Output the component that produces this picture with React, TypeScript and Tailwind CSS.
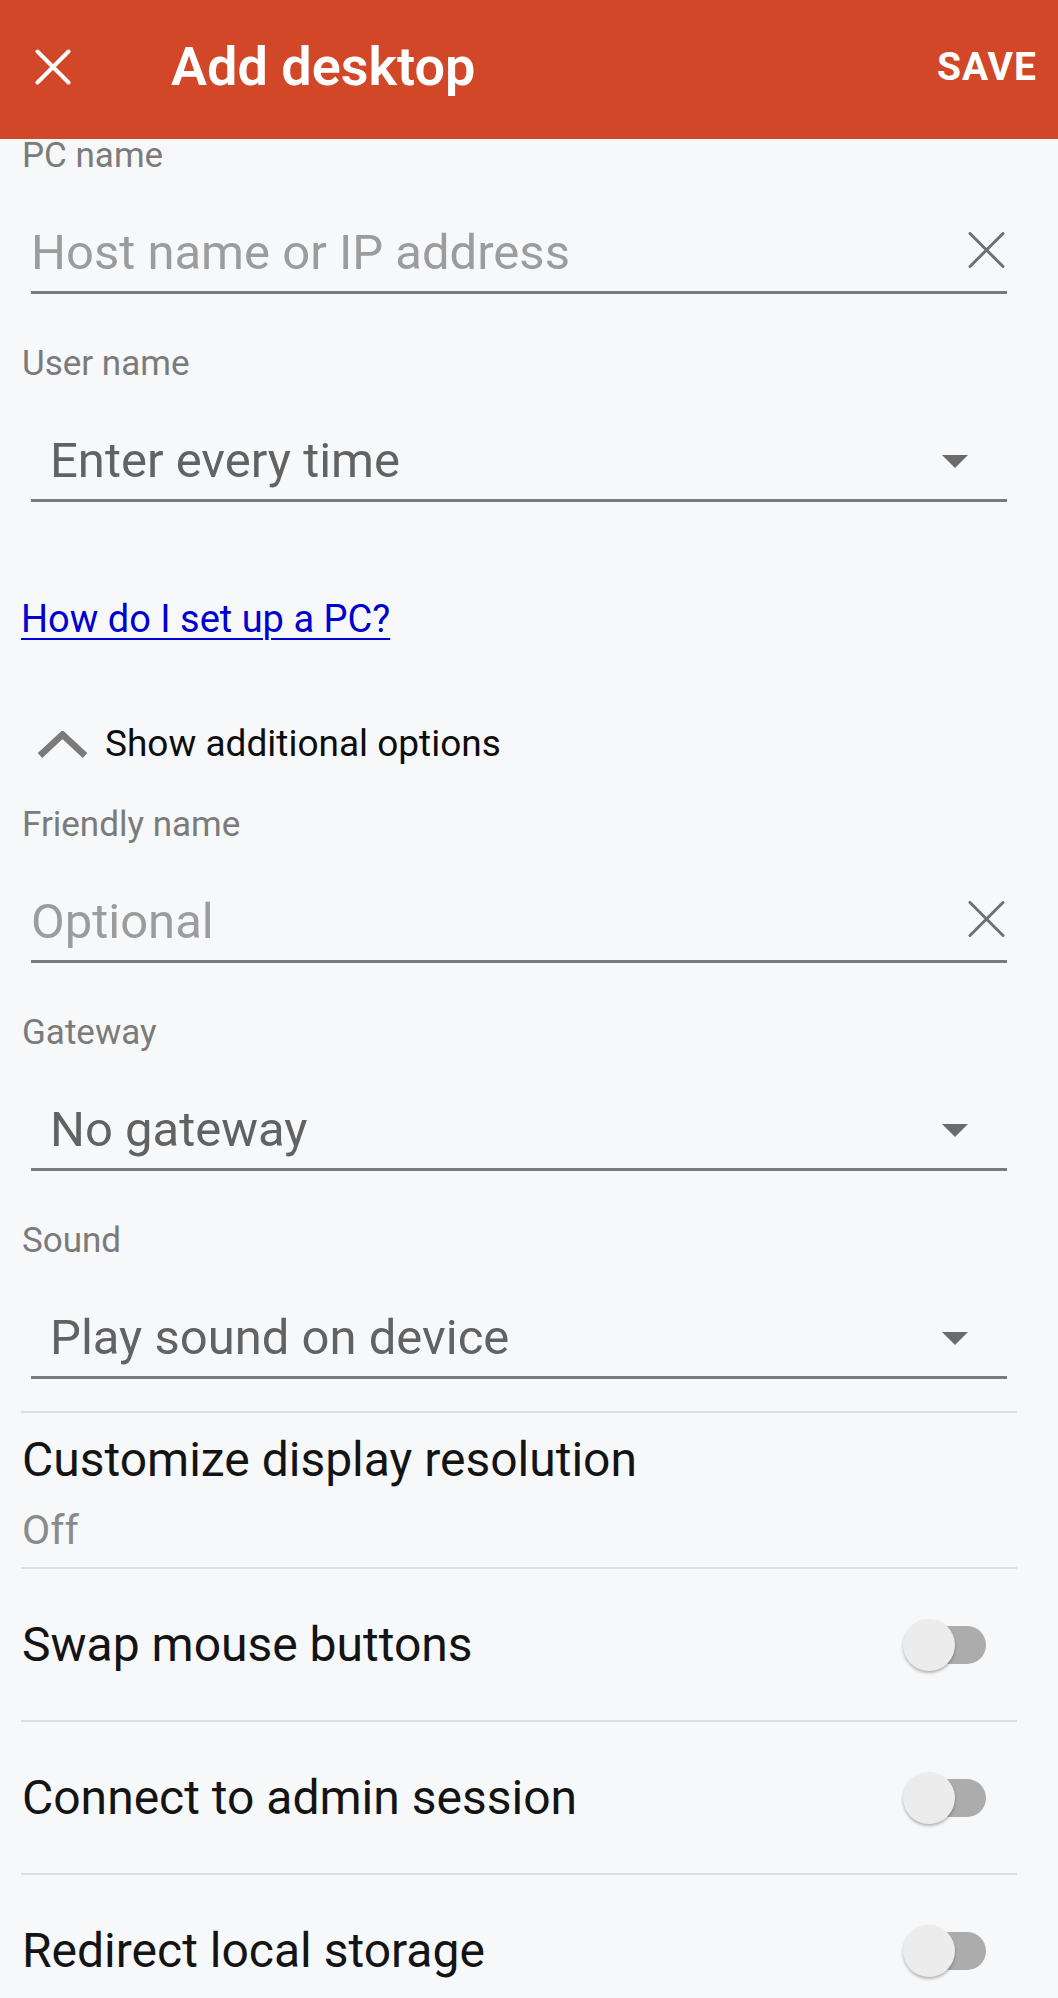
import React from 'react';

const font = { fontFamily: 'Roboto, "Noto Sans", sans-serif' };

function ClearIcon() {
  return (
    <svg width="37" height="36" viewBox="0 0 37 36" className="shrink-0 self-end mb-[15px] mr-[2px]">
      <path d="M2 1.5 L35 34.5 M35 1.5 L2 34.5" stroke="#707070" strokeWidth="3" strokeLinecap="round" fill="none" />
    </svg>
  );
}

function DropTriangle() {
  return (
    <svg width="26" height="13" viewBox="0 0 26 13" className="shrink-0 self-end mb-[23px] mr-[39px]">
      <polygon points="0,0 26,0 13,13" fill="#6b6b6b" />
    </svg>
  );
}

function TextField({ label, placeholder, first }: { label: string; placeholder: string; first?: boolean }) {
  return (
    <div className={first ? '-mt-[13px]' : 'mt-[40px]'}>
      <div className="h-[60px] leading-[60px] text-[35px] text-[#7b7b7b] pl-[1px]">{label}</div>
      <div className="mx-[10px] h-[108px] flex items-end justify-between pb-[8px] border-b-[3px] border-[#7a7a7a]">
        <span className="leading-[60px] text-[49px] text-[#9c9c9c]">{placeholder}</span>
        <ClearIcon />
      </div>
    </div>
  );
}

function SelectField({ label, value }: { label: string; value: string }) {
  return (
    <div className="mt-[40px]">
      <div className="h-[60px] leading-[60px] text-[35px] text-[#7b7b7b] pl-[1px]">{label}</div>
      <div className="mx-[10px] h-[108px] flex items-end justify-between pb-[8px] border-b-[3px] border-[#7a7a7a]">
        <span className="leading-[60px] text-[49px] text-[#626262] pl-[19px]">{value}</span>
        <DropTriangle />
      </div>
    </div>
  );
}

function Toggle() {
  return (
    <div className="relative w-[83px] h-[52px] mr-[31px]">
      <div className="absolute right-0 top-[7px] h-[38px] w-[76px] rounded-full bg-[#acacac]" />
      <div className="absolute left-0 top-0 w-[52px] h-[52px] rounded-full bg-[#ececec] shadow-[0_2px_3px_rgba(0,0,0,0.28)]" />
    </div>
  );
}

function SwitchRow({ title }: { title: string }) {
  return (
    <>
      <div className="h-[2px] bg-[#dcdde0]" />
      <div className="h-[151px] flex items-center justify-between">
        <span className="leading-[60px] text-[48px] text-[#141414] pl-[1px]">{title}</span>
        <Toggle />
      </div>
    </>
  );
}

export default function App() {
  return (
    <div className="w-[1058px] h-[1998px] overflow-hidden bg-[#f7f8fa]" style={font}>
      <header className="relative z-10 h-[139px] bg-[#d14727] flex items-center pl-[35px] pr-[21px] pb-[5px] text-white">
        <svg width="36" height="36" viewBox="0 0 36 36" className="shrink-0">
          <path d="M2.5 2.5 L33.5 33.5 M33.5 2.5 L2.5 33.5" stroke="#fff" strokeWidth="4" strokeLinecap="round" fill="none" />
        </svg>
        <h1 className="ml-[100px] text-[54px] font-semibold leading-none">Add desktop</h1>
        <span className="ml-auto text-[39px] font-bold leading-none tracking-[1px]">SAVE</span>
      </header>

      <main className="pl-[21px] pr-[41px]">
        <TextField first label="PC name" placeholder="Host name or IP address" />
        <SelectField label="User name" value="Enter every time" />

        <div className="mt-[92px] h-[50px] leading-[50px] text-[38px]">
          <a href="#" className="text-[#0000d0] underline decoration-[2px] underline-offset-[6px]">How do I set up a PC?</a>
        </div>

        <div className="mt-[70px] h-[60px] flex items-center pl-[16px]">
          <svg width="51" height="27" viewBox="0 0 51 27" className="shrink-0">
            <polyline points="3,24.5 25.5,3.5 48,24.5" stroke="#7a7a7a" strokeWidth="6.5" fill="none" />
          </svg>
          <span className="ml-[17px] leading-[60px] text-[37px] text-[#0d0d0d]">Show additional options</span>
        </div>

        <div className="mt-[21px]">
          <div className="h-[60px] leading-[60px] text-[35px] text-[#7b7b7b] pl-[1px]">Friendly name</div>
          <div className="mx-[10px] h-[108px] flex items-end justify-between pb-[8px] border-b-[3px] border-[#7a7a7a]">
            <span className="leading-[60px] text-[49px] text-[#9c9c9c]">Optional</span>
            <ClearIcon />
          </div>
        </div>
        <SelectField label="Gateway" value="No gateway" />
        <SelectField label="Sound" value="Play sound on device" />

        <div className="mt-[32px] h-[2px] bg-[#dcdde0]" />
        <div className="pt-[17px] pb-[12px]">
          <div className="h-[60px] leading-[60px] text-[48px] text-[#141414] pl-[1px]">Customize display resolution</div>
          <div className="mt-[15px] h-[50px] leading-[50px] text-[41px] text-[#8a8a8a] pl-[1px]">Off</div>
        </div>

        <SwitchRow title="Swap mouse buttons" />
        <SwitchRow title="Connect to admin session" />
        <SwitchRow title="Redirect local storage" />
      </main>
    </div>
  );
}
